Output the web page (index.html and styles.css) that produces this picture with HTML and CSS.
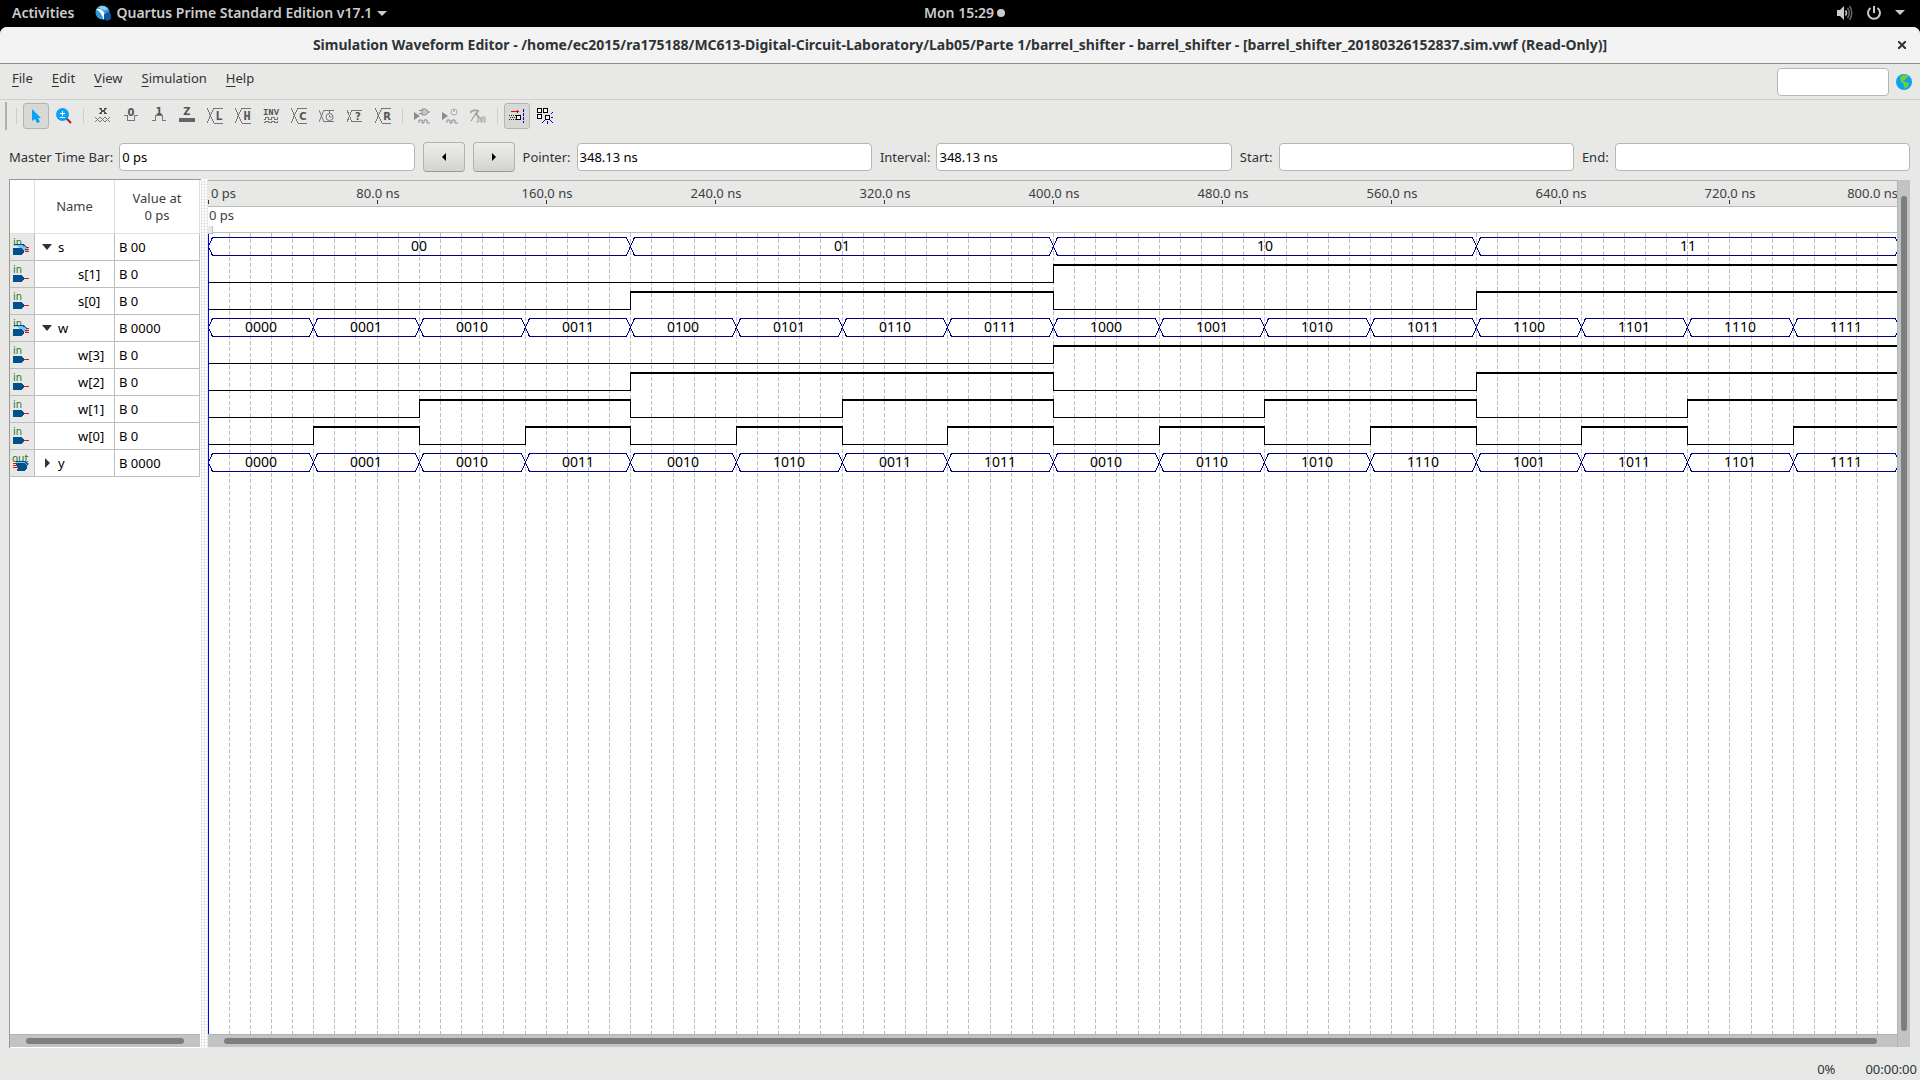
FILE: index.html
```
<!DOCTYPE html>
<html lang="en">
<head>
<meta charset="utf-8">
<title>Simulation Waveform Editor</title>
<link rel="stylesheet" href="styles.css">
</head>
<body>
<header class="topbar">
  <div class="topbar-side">
    <button class="top-item">Activities</button>
    <button class="top-item app-menu">
      <svg width="16" height="16" viewBox="0 0 16 16"><circle cx="7.500" cy="7.500" r="7" fill="#2f9bdc"/><path d="M1 4 Q7 3 10 9 Q12 13 8 14.500 Q8 9 1 4Z" fill="#fff"/><path d="M3 2 Q9 -1 13 4 Q9 7 3 2Z" fill="#8fd0f5"/><path d="M9 9l4-2 3 2v5l-4 2-3-2z" fill="#0b57a0"/></svg>
      <span>Quartus Prime Standard Edition v17.1</span>
      <svg width="10" height="6" viewBox="0 0 10 6"><path d="M0 1h10l-5 5z" fill="#ccc"/></svg>
    </button>
  </div>
  <button class="top-item clock">Mon 15:29 <span class="dot"></span></button>
  <div class="topbar-side tray">
    <svg width="16" height="16" viewBox="0 0 16 16"><path d="M0 5h3l4-4v14l-4-4H0z" fill="#ccc"/><path d="M8.500 5.500q2 2.500 0 5" fill="none" stroke="#ccc" stroke-width="1.500"/><path d="M10.500 3q3.500 5 0 10M12.500 1q4.500 7 0 14" fill="none" stroke="#666" stroke-width="1.500"/></svg>
    <svg width="16" height="16" viewBox="0 0 16 16"><path d="M4.500 3a6 6 0 1 0 7 0M8 1v7" fill="none" stroke="#ccc" stroke-width="2"/></svg>
    <svg width="10" height="6" viewBox="0 0 10 6"><path d="M0 0h10l-5 5z" fill="#ccc"/></svg>
  </div>
</header>
<div class="window">
  <div class="titlebar">
    <h1 class="title">Simulation Waveform Editor - /home/ec2015/ra175188/MC613-Digital-Circuit-Laboratory/Lab05/Parte 1/barrel_shifter - barrel_shifter - [barrel_shifter_20180326152837.sim.vwf (Read-Only)]</h1>
    <button class="close" aria-label="Close"><svg width="8" height="8" viewBox="0 0 8 8"><path d="M0 0l8 8M8 0l-8 8" stroke="#2e3436" stroke-width="2"/></svg></button>
  </div>
  <nav class="menubar">
    <button class="menu"><u>F</u>ile</button>
    <button class="menu"><u>E</u>dit</button>
    <button class="menu"><u>V</u>iew</button>
    <button class="menu"><u>S</u>imulation</button>
    <button class="menu"><u>H</u>elp</button>
    <input class="field search" aria-label="Search">
    <button class="globe" aria-label="Web"><svg width="16" height="16" viewBox="0 0 16 16"><circle cx="8" cy="8" r="8" fill="#0aa2f5"/><path d="M4 3l3-2 4 0 2 2-3 1-1 2-2 1 2 1 4 1-1 3-3 3-1-3-1-3-2-1z" fill="#6fd32a"/></svg></button>
  </nav>
  <div class="toolbar">
    <span class="handle"></span>
    <span class="sep sep-first"></span>
    <button class="tool active" aria-label="Selection tool"><svg width="16" height="16" viewBox="0 0 16 16"><path d="M4 1v12l3-2 2 4 3-1-2-4h3z" fill="#0aa2f5"/></svg></button>
    <button class="tool" aria-label="Zoom tool"><svg width="16" height="16" viewBox="0 0 16 16"><path d="M10 10l5 5" stroke="#b01818" stroke-width="2"/><circle cx="6.500" cy="6.500" r="6.500" fill="#0aa2f5"/><path d="M4 5.500h5M6.500 3v5M4 9.500h5" stroke="#fff"/></svg></button>
    <span class="sep"></span>
    <button class="tool" aria-label="Forcing unknown"><svg class="px" width="16" height="16" viewBox="0 0 16 16"><path d="M4 .500h3M9 .500h3M5 1.500h2M9 1.500h2M6 2.500h4M6 3.500h4M5 4.500h2M9 4.500h2M4 5.500h3M9 5.500h3" stroke="#555"/><path d="M0 9l5 5 5-5 5 5M0 14l5-5 5 5 5-5" class="ln"/></svg></button>
    <button class="tool" aria-label="Forcing low"><svg class="px" width="16" height="16" viewBox="0 0 16 16"><path d="M1 7.500h3M4.500 7v6M4 12.500h8M11.500 7v6M12 7.500h3" class="ln"/><text x="8" y="8" class="glyph">0</text></svg></button>
    <button class="tool" aria-label="Forcing high"><svg class="px" width="16" height="16" viewBox="0 0 16 16"><path d="M1 12.500h3M4.500 7v6M4 7.500h8M11.500 7v6M12 12.500h3" class="ln"/><text x="8" y="7" class="glyph">1</text></svg></button>
    <button class="tool" aria-label="High impedance"><svg class="px" width="16" height="16" viewBox="0 0 16 16"><path d="M0 10h16v4H0z" fill="#666"/><text x="8" y="7" class="glyph">Z</text></svg></button>
    <button class="tool" aria-label="Weak low"><svg class="px" width="16" height="16" viewBox="0 0 16 16"><path d="M0 0l7 15M7 0l-7 15M7 .500h9M7 15.500h9" class="ln"/><text x="12" y="12" class="glyph serif">L</text></svg></button>
    <button class="tool" aria-label="Weak high"><svg class="px" width="16" height="16" viewBox="0 0 16 16"><path d="M0 0l7 15M7 0l-7 15M7 .500h9M7 15.500h9" class="ln"/><text x="12" y="12" class="glyph serif">H</text></svg></button>
    <button class="tool" aria-label="Invert"><svg class="px" width="16" height="16" viewBox="0 0 16 16"><text x="8" y="7" class="glyph small">INV</text><path d="M1 11.500h1v-2h3v2h3v-2h3v2h3v-2h1M1 14.500h1v-1h3v1h3v-1h3v1h3v-1h1" class="ln"/></svg></button>
    <button class="tool" aria-label="Count value"><svg class="px" width="16" height="16" viewBox="0 0 16 16"><path d="M0 0l7 15M7 0l-7 15M7 .500h9M7 15.500h9" class="ln"/><text x="12" y="12" class="glyph">C</text></svg></button>
    <button class="tool" aria-label="Overwrite clock"><svg width="16" height="16" viewBox="0 0 16 16"><path d="M0 2l5 12M5 2l-5 12M5 2.500h10M5 13.500h10" class="ln"/><circle cx="10.500" cy="9" r="3.500" class="ln"/><path d="M10.500 3v3M10.500 7v2h2" class="ln"/></svg></button>
    <button class="tool" aria-label="Arbitrary value"><svg class="px" width="16" height="16" viewBox="0 0 16 16"><path d="M0 2l5 12M5 2l-5 12M5 2.500h10M5 13.500h10" class="ln"/><text x="11" y="12" class="glyph">?</text></svg></button>
    <button class="tool" aria-label="Random values"><svg class="px" width="16" height="16" viewBox="0 0 16 16"><path d="M0 0l7 15M7 0l-7 15M7 .500h9M7 15.500h9" class="ln"/><text x="12" y="12" class="glyph">R</text></svg></button>
    <span class="sep"></span>
    <button class="tool" aria-label="Run functional simulation"><svg width="16" height="16" viewBox="0 0 16 16"><path d="M0 4l6 4-6 4z" fill="#8c8c8c"/><path d="M5 15v-3h3v3h2v-3h3v3h3" class="dim"/><path d="M8 1h3q3 1 3 3t-3 3H8zM5 2.500h3M5 5.500h3M14 4h2" fill="#c8c8c8" class="dim"/></svg></button>
    <button class="tool" aria-label="Run timing simulation"><svg width="16" height="16" viewBox="0 0 16 16"><path d="M0 4l6 4-6 4z" fill="#8c8c8c"/><path d="M5 15v-3h3v3h2v-3h3v3h3" class="dim"/><circle cx="12" cy="4" r="3" fill="#eee" class="dim2"/><path d="M12 2v2" class="dim"/></svg></button>
    <button class="tool" aria-label="Generate testbench"><svg width="16" height="16" viewBox="0 0 16 16"><path d="M0 5q3-4 8-2l-2 3 5 6" class="dim2" fill="none" stroke-width="2"/><path d="M6 5l-5 8" class="dim"/><path d="M6 14h2v-4h3v4h1v-5h3v6" fill="#d2d2d2" class="dim2"/></svg></button>
    <span class="sep"></span>
    <button class="tool active" aria-label="Snap to transition"><svg class="px" width="16" height="16" viewBox="0 0 16 16"><path d="M2 3.500h8M8.500 2v3" stroke="#e00000"/><path d="M0 7.500h7M1 9.500h6M0 11.500h7" stroke="#222" stroke-dasharray="1 1"/><path d="M7.500 7.500h4v4h-4z" fill="#fff" stroke="#000"/><path d="M14.500 1v14" stroke="#0000e0" stroke-dasharray="3 1"/></svg></button>
    <button class="tool" aria-label="Snap to grid"><svg class="px" width="16" height="16" viewBox="0 0 16 16"><path d="M.500 .500h4v4h-4zM6.500 .500h4v4h-4zM.500 6.500h4v4h-4zM8.500 7.500h4v4h-4z" fill="#fff" stroke="#000"/><path d="M14 6l2-2M14 9.500h2M13 12l3 3M10.500 13v3M8 12l-3 3" stroke="#0000e0"/></svg></button>
  </div>
  <form class="timebar">
    <label for="master">Master Time Bar:</label><input class="field" id="master" value="0 ps">
    <button type="button" class="step" aria-label="Previous"><svg width="4" height="8" viewBox="0 0 4 8"><path d="M4 0v8L0 4z"/></svg></button>
    <button type="button" class="step" aria-label="Next"><svg width="4" height="8" viewBox="0 0 4 8"><path d="M0 0v8l4-4z"/></svg></button>
    <label for="pointer">Pointer:</label><input class="field" id="pointer" value="348.13 ns">
    <label for="interval">Interval:</label><input class="field" id="interval" value="348.13 ns">
    <label for="start">Start:</label><input class="field" id="start">
    <label for="end">End:</label><input class="field" id="end">
  </form>
  <main class="workspace">
    <section class="signals">
      <div class="signals-body">
        <table class="signal-table">
          <colgroup><col class="c-icon"><col class="c-name"><col></colgroup>
          <thead><tr><th></th><th>Name</th><th>Value at<br>0 ps</th></tr></thead>
          <tbody id="rows"></tbody>
        </table>
      </div>
      <div class="hscroll"><div class="thumb"></div></div>
    </section>
    <div class="splitter"></div>
    <section class="waves">
      <div class="waves-body">
        <div class="ruler" id="ruler"></div>
        <div class="marker-row">0 ps<span class="marker"></span></div>
        <svg class="plot" id="plot"></svg>
        <div class="hscroll"><div class="thumb"></div></div>
      </div>
      <div class="vscroll"><div class="thumb"></div></div>
    </section>
  </main>
  <footer class="status"><span>0%</span><span>00:00:00</span></footer>
</div>
<script src="script.js"></script>
</body>
</html>
```
FILE: styles.css
```
* { box-sizing: border-box; }
body {
  margin: 0;
  min-height: 100vh;
  display: flex;
  flex-direction: column;
  background: #000;
  color: #2e3436;
  font: 13px/18px "Noto Sans", "Open Sans", sans-serif;
}
button {
  padding: 0;
  border: 0;
  background: none;
  color: inherit;
  font: inherit;
}
svg { display: block; flex: none; }

.topbar {
  height: 27px;
  display: flex;
  align-items: center;
  padding-bottom: 2px;
  color: #ccc;
  font-size: 14px;
  font-weight: 600;
}
.topbar-side { flex: 1; display: flex; align-items: center; gap: 21px; padding-left: 12px; }
.top-item { display: flex; align-items: center; gap: 6px; white-space: nowrap; }
.app-menu { gap: 5px; }
.clock { gap: 3px; padding-left: 12px; }
.dot { width: 8px; height: 8px; border-radius: 50%; background: #ccc; }
.tray { justify-content: flex-end; gap: 13px; padding: 0 15px 0 0; }

.window {
  flex: 1;
  display: flex;
  flex-direction: column;
  background: #e8e8e7;
  border-radius: 7px 7px 0 0;
}
.titlebar {
  height: 37px;
  display: flex;
  align-items: center;
  background: #f3f3f3;
  border-bottom: 1px solid #8f8f8a;
  border-radius: 7px 7px 0 0;
  padding: 0 14px 0 22px;
}
.title { flex: 1; margin: 0; text-align: center; font-size: 14px; line-height: 18px; font-weight: 700; white-space: nowrap; }
.close { width: 8px; height: 8px; }

.menubar {
  height: 36px;
  display: flex;
  align-items: center;
  border-bottom: 1px solid #d0d0ce;
  padding: 0 8px 0 12px;
  gap: 19px;
}
.menu { height: 28px; padding-bottom: 8px; }
.menu u { text-underline-offset: 3px; }
.field {
  height: 28px;
  min-width: 0;
  border: 1px solid #b6b6b3;
  border-radius: 4px;
  background: #fff;
  padding: 0 2px;
  color: #000;
  font: inherit;
}
.search { width: 112px; margin-left: auto; }
.globe { margin-left: -12px; }

.toolbar { display: flex; align-items: center; height: 32px; padding-left: 5px; gap: 2px; }
.handle { width: 2px; height: 28px; background: #b0b0ae; }
.sep { width: 1px; height: 16px; margin: 0 4px; background: #cfcfcd; }
.sep-first { margin-left: 7px; }
.tool { width: 26px; height: 26px; display: flex; align-items: center; justify-content: center; }
.active { border: 1px solid #b4b4b2; border-radius: 3px; background: #d8d8d7; }
.px { shape-rendering: crispEdges; overflow: visible; }
.ln { fill: none; stroke: #777; }
.dim { stroke: #8c8c8c; }
.dim:not([fill]) { fill: none; }
.dim2 { stroke: #a8a8a8; }
.glyph { fill: #555; font: bold 10px "DejaVu Sans", sans-serif; text-anchor: middle; }
.serif { font-family: "Liberation Mono", monospace; font-size: 12px; }
.small { font-family: "Liberation Mono", monospace; font-size: 9px; }

.timebar { display: flex; align-items: center; padding: 10px 10px 7px 9px; gap: 8px; }
.timebar label { margin-right: -2px; }
.timebar .field { flex: 1; width: 0; }
.step {
  width: 42px;
  height: 30px;
  display: flex;
  align-items: center;
  justify-content: center;
  border: 1px solid #b2b2b0;
  border-bottom-color: #9a9a98;
  border-radius: 4px;
  background: linear-gradient(#ededec, #d3d3d1);
}

.workspace { flex: 1; display: flex; padding: 0 10px 0 9px; }
.signals {
  width: 192px;
  display: flex;
  flex-direction: column;
  background: #fff;
  border-left: 1px solid #999;
  border-top: 1px solid #999;
  padding: 0 1px 1px 0;
}
.signals-body { flex: 1; }
.signal-table { width: 100%; table-layout: fixed; border-collapse: separate; border-spacing: 0; color: #000; }
.c-icon { width: 25px; }
.c-name { width: 80px; }
.signal-table th {
  height: 54px;
  padding: 0;
  font-weight: 400;
  line-height: 17px;
  color: #3c4042;
  border-right: 1px solid #e0e0df;
  border-bottom: 1px solid #e0e0df;
}
.signal-table td { height: 27px; padding: 0 4px; border-right: 1px solid #bdbdbd; border-bottom: 1px solid #bdbdbd; }
.signal-table .pin { padding: 0 0 0 3px; background: #e8e8e7; }
.pin-label { font: 10px "DejaVu Sans", sans-serif; fill: #1f7a1f; }
.name { display: flex; align-items: center; gap: 6px; padding-left: 3px; }
.child { padding-left: 39px; }
.toggle { width: 10px; display: flex; justify-content: center; }

.hscroll { height: 13px; padding: 3px 16px; background: #c1c4c3; border-top: 1px solid #b2b4b3; }
.thumb { background: #7b7f7f; border-radius: 3px; height: 6px; }
.splitter {
  width: 7px;
  border-right: 1px solid #e8e8e7;
  background: radial-gradient(circle at 1px 1px, #fff 1px, transparent 1px) 1px 0 / 3px 3px;
}
.waves { flex: 1; min-width: 0; display: flex; border-top: 1px solid #e8e8e7; margin-bottom: 1px; }
.waves-body { flex: 1; min-width: 0; display: flex; flex-direction: column; background: #fff; }
.waves .hscroll { padding: 3px 20px 3px 16px; }
.ruler { position: relative; height: 27px; background: #e8e8e7; border-top: 1px solid #b2b2b0; border-bottom: 1px solid #bdbdbd; color: #3c4042; overflow: hidden; }
.ruler span { position: absolute; top: 3px; margin-left: 1px; transform: translateX(-50%); white-space: nowrap; }
.ruler .first { transform: none; margin-left: 3px; }
.ruler .last { transform: translateX(-100%); }
.ruler i { position: absolute; top: 19px; width: 1px; height: 4px; background: #333; }
.marker-row { position: relative; height: 26px; border-bottom: 1px solid #bdbdbd; color: #3c4042; padding-left: 1px; line-height: 16px; }
.marker { position: absolute; left: 0; bottom: -2px; width: 5px; height: 8px; background: #e8e8e7; border: solid #bdbdbd; border-width: 0 1px 1px 0; }
.plot { flex: 1; width: 100%; min-height: 250px; }
.bus { fill: none; stroke: #000080; shape-rendering: crispEdges; }
.grid { stroke: #bdbdbd; stroke-dasharray: 4 2; shape-rendering: crispEdges; }
.level { fill: #000; shape-rendering: crispEdges; }
.cursor { fill: #0000e6; }
.val { font: 14px "Noto Sans", sans-serif; text-anchor: middle; fill: #000; }
.vscroll { width: 13px; background: #c1c4c3; border-left: 1px solid #b2b4b3; padding: 16px 3px; display: flex; }
.vscroll .thumb { width: 6px; height: auto; }

.status { height: 32px; display: flex; justify-content: flex-end; gap: 30px; padding: 12px 3px 0; line-height: 18px; }
```
FILE: script.js
```
const bin = (n, w) => n.toString(2).padStart(w, "0");
const count = Array.from({ length: 16 }, (_, i) => i);
const outputs = ["0000", "0001", "0010", "0011", "0010", "1010", "0011", "1011",
  "0010", "0110", "1010", "1110", "1001", "1011", "1101", "1111"];

/* Every signal holds sixteen values, or four for s, spread over 800 ns. */
const signals = [
  { name: "s", dir: "in", open: true, value: "B 00", bus: [0, 1, 2, 3].map(n => bin(n, 2)) },
  { name: "s[1]", dir: "in", value: "B 0", bits: count.map(n => n >> 3 & 1) },
  { name: "s[0]", dir: "in", value: "B 0", bits: count.map(n => n >> 2 & 1) },
  { name: "w", dir: "in", open: true, value: "B 0000", bus: count.map(n => bin(n, 4)) },
  { name: "w[3]", dir: "in", value: "B 0", bits: count.map(n => n >> 3 & 1) },
  { name: "w[2]", dir: "in", value: "B 0", bits: count.map(n => n >> 2 & 1) },
  { name: "w[1]", dir: "in", value: "B 0", bits: count.map(n => n >> 1 & 1) },
  { name: "w[0]", dir: "in", value: "B 0", bits: count.map(n => n & 1) },
  { name: "y", dir: "out", open: false, value: "B 0000", bus: outputs }
];

function pinIcon(s) {
  const label = `<text class="pin-label" x="${s.dir === "out" ? -1 : 0}" y="8">${s.dir}</text>`;
  let body;
  if (s.dir === "out") {
    body = '<path d="M2 9l4-2h7l3 3-4 5z" fill="#7cc4ee"/><path d="M3 7.500h9l3 3" fill="none" stroke="#00508c"/><path d="M2 9h9l3 3v2l-3 3H4l1-3z" fill="#00508c"/><path d="M0 9.500h3M0 11.500h4M0 13.500h5" stroke="#e01010"/>';
  } else if (s.bus) {
    body = '<path d="M1 6h10l4 4v3h-4z" fill="#7cc4ee"/><path d="M1 6.500h9l4 3" fill="none" stroke="#00508c"/><path d="M0 10h8l3 3v1l-3 3H0z" fill="#00508c"/><path d="M13 9.500h3M12 11.500h4M12 13.500h4" stroke="#e01010"/>';
  } else {
    body = '<path d="M0 10h8l3 3v1l-3 3H0z" fill="#00508c"/><path d="M11 13.500h5" stroke="#e01010"/>';
  }
  return `<svg class="px" width="16" height="18" viewBox="0 0 16 18">${label + body}</svg>`;
}

document.getElementById("rows").innerHTML = signals.map(s => {
  const arrow = s.open ? '<svg width="10" height="6"><path d="M0 0h10l-5 6z" fill="#2e3436"/></svg>'
    : '<svg width="5" height="10"><path d="M0 0v10l5-5z" fill="#2e3436"/></svg>';
  const name = s.bus
    ? `<div class="name"><button class="toggle" aria-label="Toggle ${s.name}">${arrow}</button>${s.name}</div>`
    : `<div class="child">${s.name}</div>`;
  return `<tr><td class="pin">${pinIcon(s)}</td><td>${name}</td><td>${s.value}</td></tr>`;
}).join("");

const plot = document.getElementById("plot");
const ruler = document.getElementById("ruler");
const ROW = 27;

function draw() {
  const width = plot.clientWidth, height = plot.clientHeight;
  const x = ns => Math.floor(ns * (width + 2) / 800);
  let out = "";
  for (let t = 10; t < 800; t += 10) {
    out += `<path class="grid" d="M${x(t) + .5} 0V${height}"/>`;
  }
  signals.forEach((s, i) => {
    const top = i * ROW + 4, low = top + 18;
    if (s.bus) {
      const span = 800 / s.bus.length;
      s.bus.forEach((v, k) => {
        const a = x(k * span), b = x((k + 1) * span), m = top + 9;
        out += `<path class="bus" d="M${a + .5} ${m + .5}L${a + 4.5} ${top + .5}H${b - 3.5}L${b + .5} ${m + .5}L${b - 3.5} ${low + .5}H${a + 4.5}Z"/>`;
        out += `<text class="val" x="${Math.round((a + b) / 2)}" y="${top + 14}">${v}</text>`;
      });
    } else {
      s.bits.forEach((v, k) => {
        const a = x(k * 50), b = x((k + 1) * 50);
        out += v ? `<rect class="level" x="${a}" y="${top}" width="${b - a}" height="2"/>`
          : `<rect class="level" x="${a}" y="${low}" width="${b - a}" height="1"/>`;
        if (k && v !== s.bits[k - 1]) {
          out += `<rect class="level" x="${a}" y="${top}" width="1" height="19"/>`;
        }
      });
    }
  });
  out += `<rect class="cursor" width="1" height="${height}"/>`;
  plot.innerHTML = out;

  let marks = "";
  for (let t = 0; t <= 800; t += 80) {
    const label = t ? t + ".0 ns" : "0 ps";
    const edge = t === 0 ? "first" : t === 800 ? "last" : "";
    const left = t === 800 ? width : x(t);
    marks += `<span class="${edge}" style="left:${left}px">${label}</span>`;
    if (t < 800) marks += `<i style="left:${left}px"></i>`;
  }
  ruler.innerHTML = marks;
}
draw();
window.addEventListener("resize", draw);
```
